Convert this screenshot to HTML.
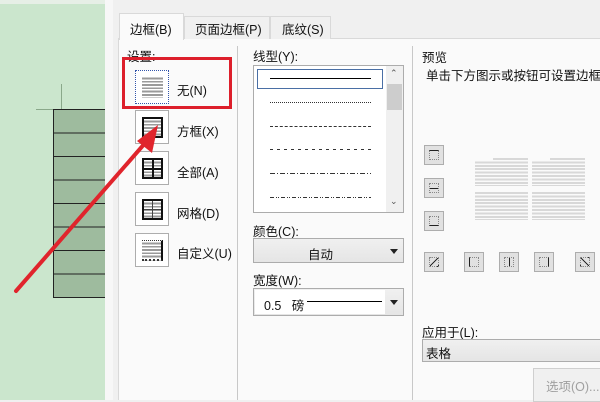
<!DOCTYPE html>
<html><head><meta charset="utf-8"><style>
*{margin:0;padding:0;box-sizing:border-box}
body{width:600px;height:400px;position:relative;overflow:hidden;background:#f0f0f0;font-family:"Liberation Sans","Noto Sans CJK SC",sans-serif;font-size:12px;color:#111}
.a{position:absolute}
.t{position:absolute;white-space:nowrap;font-size:12.5px}
.ic{position:absolute;width:34px;height:34px;border:1px solid #adadad;background:#fff}
.dd{position:absolute;border:1px solid #acacac;background:linear-gradient(#f0f0f0,#e5e5e5)}
.arr{position:absolute;width:0;height:0;border-left:4px solid transparent;border-right:4px solid transparent;border-top:5px solid #222}
.pb{position:absolute;width:20px;height:20px;border:1px solid #adadad;background:#e1e1e1}
.pb i{position:absolute;left:4px;top:4px;width:10px;height:10px;border:1px dotted #888}
.pl{position:absolute;background:repeating-linear-gradient(#d8d8d8 0 2px,transparent 2px 3.4px)}
.ln{background:repeating-linear-gradient(#fff 0 1.5px,#9a9a9a 1.5px 3.3px)}
</style></head><body>
<div class="a" style="left:0;top:0;width:105px;height:400px;background:#cbe6cd"></div>
<div class="a" style="left:0;top:0;width:105px;height:4px;background:#e6efe6"></div>
<div class="a" style="left:61px;top:84px;width:1px;height:26px;background:#8aa88a"></div>
<div class="a" style="left:36px;top:109px;width:18px;height:1px;background:#8aa88a"></div>
<div class="a" style="left:53px;top:109px;width:52px;height:189px;background:repeating-linear-gradient(#9ebb9e 0 22.5px,#222 22.5px 23.5px);border:1px solid #222;border-right:none"></div>
<div class="a" style="left:105px;top:0;width:8px;height:400px;background:#f7f7f7"></div>
<div class="a" style="left:113px;top:0;width:487px;height:400px;background:#f0f0f0"></div>
<div class="a" style="left:118px;top:38px;width:482px;height:362px;background:#fafafa;border-left:1px solid #d9d9d9;border-top:1px solid #d9d9d9"></div>
<div class="a" style="left:184px;top:16px;width:86px;height:23px;background:#f0f0f0;border:1px solid #d9d9d9;border-bottom:none"></div>
<div class="a" style="left:270px;top:16px;width:61px;height:23px;background:#f0f0f0;border:1px solid #d9d9d9;border-bottom:none"></div>
<div class="a" style="left:119px;top:13px;width:65px;height:27px;background:#fafafa;border:1px solid #d9d9d9;border-bottom:none"></div>
<div class="t" style="left:130px;top:19px">边框(B)</div>
<div class="t" style="left:195px;top:19px">页面边框(P)</div>
<div class="t" style="left:282px;top:19px">底纹(S)</div>
<div class="t" style="left:127px;top:46px">设置:</div>
<div class="ic" style="left:135px;top:70px;border:1px dotted #3355aa"><div class="a ln" style="left:6px;top:5px;width:21px;height:22px"></div></div>
<div class="ic" style="left:135px;top:110px"><div class="a ln" style="left:6px;top:6px;width:21px;height:21px;border:2px solid #111"></div></div>
<div class="ic" style="left:135px;top:151px"><div class="a" style="left:6px;top:6px;width:21px;height:21px;border:2px solid #111;background:linear-gradient(#111,#111) 7.5px 0/2px 100% no-repeat,linear-gradient(#111,#111) 0 7.5px/100% 2px no-repeat,repeating-linear-gradient(#fff 0 1.5px,#9a9a9a 1.5px 3.3px)"></div></div>
<div class="ic" style="left:135px;top:192px"><div class="a" style="left:6px;top:6px;width:21px;height:21px;border:2px solid #111;background:linear-gradient(#444,#444) 8px 0/1px 100% no-repeat,linear-gradient(#444,#444) 0 8px/100% 1px no-repeat,repeating-linear-gradient(#fff 0 1.5px,#9a9a9a 1.5px 3.3px)"></div></div>
<div class="ic" style="left:135px;top:233px"><div class="a ln" style="left:6px;top:6px;width:21px;height:21px;border-right:2px solid #111;border-top:1px dotted #333;border-bottom:2px dotted #333"></div></div>
<div class="t" style="left:177px;top:80px">无(N)</div>
<div class="t" style="left:177px;top:121px">方框(X)</div>
<div class="t" style="left:177px;top:162px">全部(A)</div>
<div class="t" style="left:177px;top:203px">网格(D)</div>
<div class="t" style="left:177px;top:243px">自定义(U)</div>
<div class="a" style="left:122px;top:57px;width:110px;height:52px;border:3px solid #dd1f2b"></div>
<div class="a" style="left:237px;top:46px;width:1px;height:354px;background:#c8c8c8"></div>
<div class="a" style="left:412px;top:46px;width:1px;height:354px;background:#c8c8c8"></div>
<div class="t" style="left:253px;top:46px">线型(Y):</div>
<div class="a" style="left:253px;top:65px;width:151px;height:148px;border:1px solid #acacac;background:#fff"></div>
<div class="a" style="left:257px;top:69px;width:126px;height:20px;border:1px solid #4a6fa5"></div>
<div class="a" style="left:270px;top:78px;width:101px;height:1px;background:#000"></div>
<div class="a" style="left:270px;top:102px;width:101px;border-top:1px dotted #333"></div>
<div class="a" style="left:270px;top:126px;width:101px;border-top:1px dashed #333"></div>
<div class="a" style="left:270px;top:149px;width:101px;height:1px;background:repeating-linear-gradient(90deg,#333 0 3px,transparent 3px 7px)"></div>
<div class="a" style="left:270px;top:173px;width:101px;height:1px;background:repeating-linear-gradient(90deg,#333 0 5px,transparent 5px 7px,#333 7px 8px,transparent 8px 10px)"></div>
<div class="a" style="left:270px;top:197px;width:101px;height:1px;background:repeating-linear-gradient(90deg,#333 0 4px,transparent 4px 6px,#333 6px 7px,transparent 7px 8px,#333 8px 9px,transparent 9px 11px)"></div>
<div class="a" style="left:386px;top:66px;width:17px;height:146px;background:#f0f0f0"></div>
<div class="a" style="left:387px;top:84px;width:15px;height:26px;background:#cdcdcd"></div>
<div class="t" style="left:390px;top:68px;font-size:9px;color:#555">&#8963;</div>
<div class="t" style="left:390px;top:196px;font-size:9px;color:#555">&#8964;</div>
<div class="t" style="left:253px;top:221px">颜色(C):</div>
<div class="dd" style="left:253px;top:238px;width:151px;height:25px"></div>
<div class="t" style="left:308px;top:244px">自动</div>
<div class="arr" style="left:390px;top:249px"></div>
<div class="t" style="left:253px;top:270px">宽度(W):</div>
<div class="dd" style="left:253px;top:288px;width:151px;height:28px"></div>
<div class="a" style="left:255px;top:290px;width:130px;height:24px;background:#fff"></div>
<div class="t" style="left:264px;top:295px">0.5&nbsp;&nbsp;&nbsp;磅</div>
<div class="a" style="left:307px;top:301px;width:75px;height:1px;background:#000"></div>
<div class="arr" style="left:390px;top:300px"></div>
<div class="t" style="left:422px;top:47px">预览</div>
<div class="t" style="left:426px;top:65px">单击下方图示或按钮可设置边框</div>
<div class="pb" style="left:424px;top:145px"><i style="border-top:1px solid #222"></i></div>
<div class="pb" style="left:424px;top:178px"><i style="background:linear-gradient(#222,#222) 0 4px/100% 1px no-repeat"></i></div>
<div class="pb" style="left:424px;top:211px"><i style="border-bottom:1px solid #222"></i></div>
<div class="pb" style="left:424px;top:252px"><i style="background:linear-gradient(to bottom right,transparent 45%,#222 47%,#222 53%,transparent 55%)"></i></div>
<div class="pb" style="left:464px;top:252px"><i style="border-left:1px solid #222"></i></div>
<div class="pb" style="left:499px;top:252px"><i style="background:linear-gradient(#222,#222) 4px 0/1px 100% no-repeat"></i></div>
<div class="pb" style="left:534px;top:252px"><i style="border-right:1px solid #222"></i></div>
<div class="pb" style="left:575px;top:252px"><i style="background:linear-gradient(to top right,transparent 45%,#222 47%,#222 53%,transparent 55%)"></i></div>
<div class="pl" style="left:475px;top:158px;width:53px;height:28px"></div>
<div class="pl" style="left:532px;top:158px;width:53px;height:28px"></div>
<div class="pl" style="left:475px;top:192px;width:53px;height:28px"></div>
<div class="pl" style="left:532px;top:192px;width:53px;height:28px"></div>
<div class="a" style="left:475px;top:158px;width:18px;height:3px;background:#fafafa"></div>
<div class="a" style="left:532px;top:158px;width:18px;height:3px;background:#fafafa"></div>
<div class="t" style="left:422px;top:322px">应用于(L):</div>
<div class="dd" style="left:422px;top:339px;width:180px;height:23px"></div>
<div class="t" style="left:426px;top:343px">表格</div>
<div class="a" style="left:533px;top:368px;width:70px;height:34px;border:1px solid #cfcfcf;background:#f0f0f0"></div>
<div class="t" style="left:546px;top:376px;color:#a0a0a0">选项(O)...</div>
<svg class="a" style="left:0;top:0" width="600" height="400">
<line x1="16" y1="291" x2="146" y2="142" stroke="#e0242c" stroke-width="4" stroke-linecap="round"/>
<polygon points="158,125 137,141 152,153" fill="#e0242c"/>
</svg>
</body></html>
